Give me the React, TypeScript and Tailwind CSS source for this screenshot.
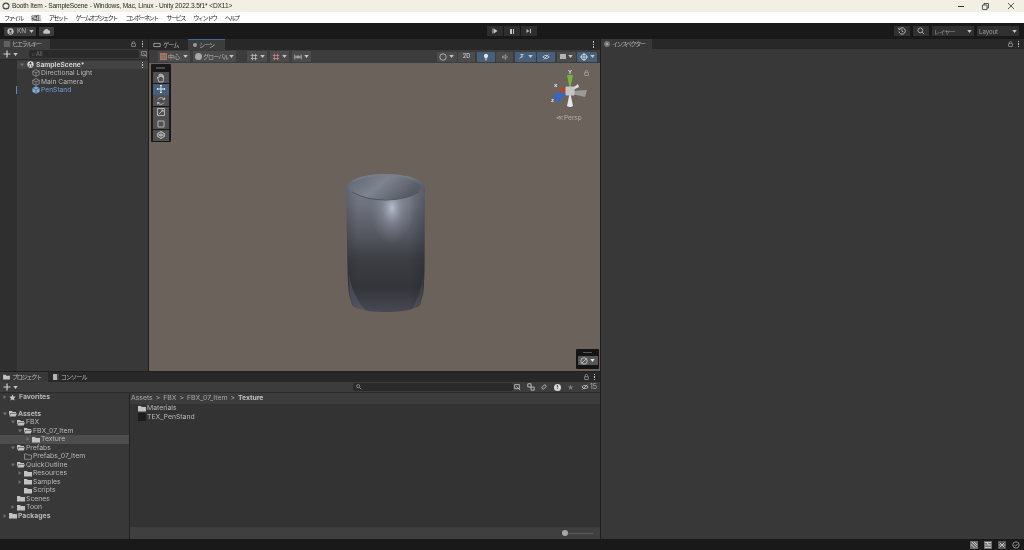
import { ReactNode } from "react";

const jp = "font-['Noto_Sans_CJK_JP','Noto_Sans',sans-serif] whitespace-nowrap";

const Caret = ({ dir }: { dir?: "right" | "down" }) => (
  <svg viewBox="0 0 6 6" className="w-[6px] h-[6px] shrink-0">
    {dir === "right" && <path d="M1.5 1 L4.5 3 L1.5 5 Z" fill="#6e6e6e" />}
    {dir === "down" && <path d="M0.8 1.5 L5.2 1.5 L3 4.5 Z" fill="#6e6e6e" />}
  </svg>
);

const Drop = ({ color = "#c4c4c4" }: { color?: string }) => (
  <svg viewBox="0 0 6 4" className="w-[5px] h-[3px] shrink-0">
    <path d="M0 0 H6 L3 4 Z" fill={color} />
  </svg>
);

const Folder = ({ open, empty }: { open?: boolean; empty?: boolean }) => (
  <svg viewBox="0 0 8 7" className="w-[8px] h-[7px] shrink-0">
    {empty ? (
      <path d="M0.5 1 H3 L3.8 2 H7.5 V6.3 H0.5 Z" fill="none" stroke="#b8b8b8" strokeWidth="0.6" />
    ) : open ? (
      <>
        <path d="M0 1 H3 L3.8 2 H7 V3 H1.5 L0 6 Z" fill="#c2c2c2" />
        <path d="M1.8 3.4 H8 L6.6 6.5 H0.5 Z" fill="#c2c2c2" />
      </>
    ) : (
      <path d="M0 1 H3 L3.8 2 H8 V6.5 H0 Z" fill="#c2c2c2" />
    )}
  </svg>
);

const Cube = ({ color = "#b4b4b4", solid }: { color?: string; solid?: boolean }) => (
  <svg viewBox="0 0 10 10" className="w-[8px] h-[8px] shrink-0">
    <path d="M5 0.8 L9 2.8 V7.2 L5 9.2 L1 7.2 V2.8 Z" fill={solid ? color : "none"} stroke={color} strokeWidth="0.8" />
    <path d="M1 2.8 L5 4.8 L9 2.8 M5 4.8 V9.2" fill="none" stroke={solid ? "#2f3b46" : color} strokeWidth="0.7" />
  </svg>
);

const Lock = () => (
  <svg viewBox="0 0 6 7" className="w-[5px] h-[6px]">
    <path d="M1.5 3 V2 A1.5 1.5 0 0 1 4.5 2" fill="none" stroke="#bdbdbd" strokeWidth="0.7" />
    <rect x="0.7" y="3" width="4.6" height="3.5" rx="0.5" fill="none" stroke="#bdbdbd" strokeWidth="0.7" />
  </svg>
);

const Kebab = () => (
  <div className="flex flex-col gap-[1px]">
    <span className="w-[1.5px] h-[1.5px] bg-[#c4c4c4]" />
    <span className="w-[1.5px] h-[1.5px] bg-[#c4c4c4]" />
    <span className="w-[1.5px] h-[1.5px] bg-[#c4c4c4]" />
  </div>
);

const Plus = () => (
  <div className="flex items-center gap-[1.5px]">
    <svg viewBox="0 0 8 8" className="w-[8px] h-[8px]">
      <path d="M4 0.5 V7.5 M0.5 4 H7.5" stroke="#d0d0d0" strokeWidth="1.2" />
    </svg>
    <Drop />
  </div>
);

const Btn = ({ w, blue, children }: { w: string; blue?: boolean; children: ReactNode }) => (
  <div className={`${w} h-[10px] rounded-[1px] flex items-center justify-center gap-[2px] ${blue ? "bg-[#46607c]" : "bg-[#4b4b4b]"}`}>
    {children}
  </div>
);

const Tab = ({ icon, label }: { icon: ReactNode; label: string }) => (
  <div className="h-full flex items-center gap-[2px] pl-[3px] pr-[7px] bg-[#383838]">
    {icon}
    <span className={`${jp} text-[6.2px] tracking-[-1.4px] text-[#b4b4b4]`}>{label}</span>
  </div>
);

const Glyph = ({ d, color = "#c4c4c4", big }: { d: string; color?: string; big?: boolean }) => (
  <svg viewBox="0 0 10 10" className={`${big ? "w-[10px] h-[10px]" : "w-[8px] h-[8px]"} shrink-0`}>
    <path d={d} fill="none" stroke={color} strokeWidth="1" />
  </svg>
);

const Title = () => (
  <div className="h-[12px] bg-[#f2f0e4] flex items-center relative">
    <svg viewBox="0 0 10 10" className="w-[8px] h-[8px] ml-[2px]">
      <circle cx="5" cy="5" r="4.4" fill="#3a3a3a" />
      <path d="M5 2 L8 3.6 V6.6 L5 8.2 L2 6.6 V3.6 Z" fill="#efefef" />
    </svg>
    <span className="ml-[2px] font-['Liberation_Sans',sans-serif] text-[6.6px] tracking-[-0.12px] text-[#262626]">
      Booth Item - SampleScene - Windows, Mac, Linux - Unity 2022.3.5f1* &lt;DX11&gt;
    </span>
    <div className="ml-auto flex items-center">
      <div className="w-[24px] flex justify-center"><span className="w-[6px] h-[1px] bg-[#333]" /></div>
      <div className="w-[25px] flex justify-center">
        <svg viewBox="0 0 7 7" className="w-[7px] h-[7px]">
          <path d="M0.5 2 H5 V6.5 H0.5 Z M2 2 V0.5 H6.5 V5 H5" fill="none" stroke="#333" strokeWidth="0.8" />
        </svg>
      </div>
      <div className="w-[25px] mr-[1px] flex justify-center">
        <svg viewBox="0 0 6 6" className="w-[6px] h-[6px]"><path d="M0 0 L6 6 M6 0 L0 6" stroke="#333" strokeWidth="0.8" /></svg>
      </div>
    </div>
  </div>
);

const menus = ["ファイル", "編集", "アセット", "ゲームオブジェクト", "コンポーネント", "サービス", "ウィンドウ", "ヘルプ"];

const Menu = () => (
  <div className={`h-[11px] bg-white flex items-center gap-[8.4px] pl-[4px] ${jp} text-[6.2px] tracking-[-1.55px] text-[#222]`}>
    {menus.map((m) => (
      <span key={m}>{m}</span>
    ))}
  </div>
);

const MainBar = () => (
  <div className="h-[16px] bg-[#191919] flex items-center pl-[4px] pr-[5px]">
    <div className="w-[32px] h-[9px] bg-[#3c3c3c] rounded-[1px] flex items-center gap-[3px] pl-[3px]">
      <svg viewBox="0 0 8 8" className="w-[7px] h-[7px]">
        <circle cx="4" cy="4" r="3.6" fill="#c4c4c4" />
        <circle cx="4" cy="3.2" r="1.3" fill="#3c3c3c" />
        <path d="M1.8 6.4 A2.4 2 0 0 1 6.2 6.4" fill="#3c3c3c" />
      </svg>
      <span className="font-['Inter',sans-serif] text-[6.5px] leading-[9px] text-[#b4b4b4]">KN</span>
      <Drop />
    </div>
    <div className="w-[15px] h-[9px] bg-[#3c3c3c] rounded-[1px] ml-[3px] flex items-center justify-center">
      <svg viewBox="0 0 10 6" className="w-[9px] h-[6px]">
        <path d="M2.5 6 A2 2 0 0 1 2.3 2.4 A2.8 2.8 0 0 1 7.4 2.2 A2 2 0 0 1 8 6 Z" fill="#c4c4c4" />
      </svg>
    </div>
    <div className="ml-[433px] w-[50px] h-[10px] grid grid-cols-3 gap-[1px]">
      <div className="bg-[#2e2e2e] flex items-center justify-center">
        <svg viewBox="0 0 6 6" className="w-[6px] h-[6px]"><path d="M0.5 0.5 H1.3 V5.5 H0.5 Z M1.8 0.5 L5.5 3 L1.8 5.5 Z" fill="#c4c4c4" /></svg>
      </div>
      <div className="bg-[#2e2e2e] flex items-center justify-center gap-[1px]">
        <span className="w-[1.5px] h-[5px] bg-[#c4c4c4]" />
        <span className="w-[1.5px] h-[5px] bg-[#c4c4c4]" />
      </div>
      <div className="bg-[#2e2e2e] flex items-center justify-center">
        <svg viewBox="0 0 6 6" className="w-[6px] h-[6px]"><path d="M0.5 1 L3.5 3 L0.5 5 Z M4 0.8 H5 V5.2 H4 Z" fill="#b4b4b4" /></svg>
      </div>
    </div>
    <div className="ml-auto flex items-center gap-[3px] h-[10px]">
      <div className="w-[16px] h-full bg-[#303030] flex items-center justify-center">
        <Glyph d="M2 2.5 A4 4 0 1 1 1.2 5.5 M5 3 V5.4 L6.6 6.2 M1 1 V3 H3" color="#d0d0d0" />
      </div>
      <div className="w-[16px] h-full bg-[#303030] flex items-center justify-center">
        <Glyph d="M4.2 1.2 A3 3 0 1 1 4.2 7.2 A3 3 0 1 1 4.2 1.2 M6.4 6.4 L9 9" />
      </div>
      <div className="w-[42px] h-full bg-[#303030] flex items-center justify-between px-[2px]">
        <span className={`${jp} text-[6px] tracking-[-0.8px] text-[#9a9a9a]`}>レイヤー</span>
        <Drop />
      </div>
      <div className="w-[42px] h-full bg-[#303030] flex items-center justify-between px-[2px]">
        <span className="font-['Inter',sans-serif] text-[6px] text-[#9a9a9a]">Layout</span>
        <Drop />
      </div>
    </div>
  </div>
);

const Hierarchy = () => (
  <div className="w-[148px] bg-[#383838] flex flex-col">
    <div className="h-[10px] bg-[#282828] flex items-center">
      <div className="h-full w-[50px] bg-[#3c3c3c] flex items-center gap-[1px] pl-[3px]">
        <Glyph d="M1 2.5 H9 M1 5 H9 M1 7.5 H9" color="#9a9a9a" />
        <span className={`${jp} text-[6.2px] tracking-[-1.4px] text-[#b4b4b4]`}>ヒエラルキー</span>
      </div>
      <div className="ml-auto mr-[5px] flex items-center gap-[6px]">
        <Lock />
        <Kebab />
      </div>
    </div>
    <div className="h-[11px] bg-[#3c3c3c] flex items-center pl-[3px] border-b border-[#2a2a2a]">
      <Plus />
      <div className="ml-[11px] w-[115px] h-[8px] bg-[#2a2a2a] rounded-[2px] flex items-center pl-[3px] gap-[2px]">
        <span className="font-['Inter',sans-serif] text-[5.5px] text-[#777]">⌕ All</span>
      </div>
      <div className="ml-[1px]"><Glyph d="M2 7 H8 V2 H2 Z M4 4 L9 9" color="#999" /></div>
    </div>
    <div className="flex flex-1">
      <div className="w-[17px] bg-[#2f2f2f] flex flex-col pt-[26px] items-end">
        <span className="w-[1px] h-[8px] bg-[#4f8fd0]" />
      </div>
      <div className="flex-1 flex flex-col pt-[0.5px] font-['Inter',sans-serif] text-[6.7px] text-[#b8b8b8] leading-[8.5px]">
        <div className="h-[8.5px] bg-[#434343] flex items-center pl-[2px] gap-[2px] pr-[5px]">
          <Caret dir="down" />
          <svg viewBox="0 0 10 10" className="w-[7px] h-[7px] shrink-0">
            <circle cx="5" cy="5" r="4.5" fill="#dcdcdc" />
            <path d="M5 1 L7 4.6 H3 Z M2 8 L3 5.4 L4.6 8 Z M8 8 L7 5.4 L5.4 8 Z" fill="#333" />
          </svg>
          <span className="font-bold text-[#d0d0d0]">SampleScene*</span>
          <div className="ml-auto"><Kebab /></div>
        </div>
        <div className="h-[8.5px] flex items-center pl-[15px] gap-[1px]"><Cube /><span>Directional Light</span></div>
        <div className="h-[8.5px] flex items-center pl-[15px] gap-[1px]"><Cube /><span>Main Camera</span></div>
        <div className="h-[8.5px] flex items-center pl-[15px] gap-[1px] text-[#6d9fd6]"><Cube color="#7fb2e0" solid /><span>PenStand</span></div>
      </div>
    </div>
  </div>
);

const Scene = () => (
  <div className="w-[451px] flex flex-col">
    <div className="h-[11px] bg-[#282828] flex items-center">
      <div className="h-full w-[39px] flex items-center gap-[2px] pl-[4px]">
        <Glyph d="M1 3 H9 V7 H1 Z" color="#b4b4b4" />
        <span className={`${jp} text-[6.2px] tracking-[-1px] text-[#b4b4b4]`}>ゲーム</span>
      </div>
      <div className="h-full w-[37px] bg-[#3c3c3c] border-t border-[#3d6a9c] flex items-center gap-[2px] pl-[4px]">
        <span className="w-[4px] h-[4px] rounded-full bg-[#9a9a9a] ml-[1px]" />
        <span className={`${jp} text-[6.2px] tracking-[-1px] text-[#b4b4b4]`}>シーン</span>
      </div>
      <div className="ml-auto mr-[6px]"><Kebab /></div>
    </div>
    <div className="h-[13px] bg-[#3c3c3c] flex items-center pl-[9px] pr-[3px] gap-[2px]">
      <div className="w-[32px] h-[11px] bg-[#4b4b4b] rounded-[1px] flex items-center gap-[1px] px-[2px]">
        <span className="w-[7px] h-[7px] border border-[#d0654a] bg-[#777]" />
        <span className={`${jp} text-[6px] text-[#b4b4b4]`}>中心</span>
        <div className="ml-auto"><Drop /></div>
      </div>
      <div className="w-[43px] h-[11px] bg-[#4b4b4b] rounded-[1px] flex items-center gap-[1px] px-[2px] ml-[1px]">
        <span className="w-[7px] h-[7px] rounded-full bg-[#a8a8a8] shrink-0" />
        <span className={`${jp} text-[6px] tracking-[-0.9px] text-[#b4b4b4]`}>グローバル</span>
        <div className="ml-auto"><Drop /></div>
      </div>
      <div className="w-[20px] h-[11px] bg-[#4b4b4b] ml-[9px] flex items-center justify-center gap-[2px]"><Glyph d="M3 1 V9 M7 1 V9 M1 3 H9 M1 7 H9" /><Drop /></div>
      <div className="w-[19px] h-[11px] bg-[#4b4b4b] ml-[1px] flex items-center justify-center gap-[2px]"><Glyph d="M3 1 V9 M7 1 V9 M1 3 H9 M1 7 H9" color="#d88" /><Drop /></div>
      <div className="w-[19px] h-[11px] bg-[#4b4b4b] ml-[1px] flex items-center justify-center gap-[2px]"><Glyph d="M1 2 V8 M9 2 V8 M1 5 H9 M4 3 V7 M6 3 V7" /><Drop /></div>
      <div className="ml-auto flex items-center gap-[1.5px]">
        <Btn w="w-[20px]"><Glyph d="M5 1 A4 4 0 1 1 5 9 A4 4 0 1 1 5 1" /><Drop /></Btn>
        <Btn w="w-[17px]"><span className="font-['Inter',sans-serif] text-[5.5px] text-[#c4c4c4] font-semibold">2D</span></Btn>
        <Btn w="w-[18px]" blue>
          <svg viewBox="0 0 8 10" className="w-[6px] h-[8px]"><path d="M4 0.5 A3 3 0 0 1 5.5 6 V7 H2.5 V6 A3 3 0 0 1 4 0.5 Z M3 8 H5 V9.4 H3 Z" fill="#e4e4e4" /></svg>
        </Btn>
        <Btn w="w-[17px]"><Glyph d="M2 4 H4 L6 2 V8 L4 6 H2 Z M7.5 4 V6" color="#aaa" /></Btn>
        <Btn w="w-[21px]" blue><Glyph d="M2 7 L5 4 M5 2 V6 M3 2 H7" color="#e0e0e0" /><Drop /></Btn>
        <Btn w="w-[18px]" blue><Glyph d="M1 5 Q5 1 9 5 Q5 9 1 5 M2 8 L8 2" color="#d8d8d8" /></Btn>
        <Btn w="w-[19px]">
          <span className="w-[6px] h-[5px] bg-[#b4b4b4]" />
          <Drop />
        </Btn>
        <Btn w="w-[20px]" blue>
          <Glyph d="M5 1.5 A3.5 3.5 0 1 1 5 8.5 A3.5 3.5 0 1 1 5 1.5 M5 0 V10 M0 5 H10" color="#e0e0e0" />
          <Drop />
        </Btn>
      </div>
    </div>
    <div className="relative flex-1 bg-[#6b625c] overflow-hidden">
      <ToolsOverlay />
      <Gizmo />
      <Mug />
      <div className="absolute right-[1px] bottom-[2px] w-[23px] h-[20px] bg-[#141414] rounded-[1px] flex flex-col items-center pt-[3px]">
        <span className="w-[9px] h-[1px] bg-[#555]" />
        <div className="mt-[3px] w-[20px] h-[9px] bg-[#585858] flex items-center justify-center gap-[2px]">
          <Glyph d="M5 1 A4 4 0 1 1 5 9 A4 4 0 1 1 5 1 M2 8 L8 2" color="#d4d4d4" />
          <Drop color="#e4e4e4" />
        </div>
      </div>
    </div>
  </div>
);

const toolIcons = [
  "M3 9 L1.5 5 V4 L3 5 V1.5 H4 V4 V1 H5.2 V4 V1.5 H6.4 V4.5 V2.5 H7.5 V6 L7 9 Z",
  "M5 1 V9 M1 5 H9 M4 2 L5 1 L6 2 M4 8 L5 9 L6 8 M2 4 L1 5 L2 6 M8 4 L9 5 L8 6",
  "M2 3.5 A3.7 3.7 0 0 1 8.4 3.5 M8 6.5 A3.7 3.7 0 0 1 1.6 6.5 M6.5 3.5 H8.6 V1.5 M3.5 6.5 H1.4 V8.5",
  "M1.5 1.5 H8.5 V8.5 H1.5 Z M3 7 L7 3 M5 3 H7 V5",
  "M2 2 H8 V8 H2 Z",
  "M5 1.5 L8.5 3.5 V6.5 L5 8.5 L1.5 6.5 V3.5 Z M5 1.5 V8.5 M1.5 3.5 L8.5 6.5 M8.5 3.5 L1.5 6.5",
];

const ToolsOverlay = () => (
  <div className="absolute left-[1.5px] top-[1px] w-[20px] h-[78px] bg-[#191919] rounded-[1px] flex flex-col items-center pt-[2px]">
    <span className="w-[9px] h-[2px] bg-[#4a4a4a] mt-[1px] mb-[3px]" />
    <div className="flex flex-col gap-[0.5px]">
      {toolIcons.map((d, i) => (
        <div key={d} className={`w-[16px] h-[11px] flex items-center justify-center ${i === 1 ? "bg-[#46607c]" : "bg-[#505050]"}`}>
          <Glyph big d={d} color={i === 1 ? "#e4e4e4" : "#b4b4b4"} />
        </div>
      ))}
    </div>
  </div>
);

const Gizmo = () => (
  <>
    <svg viewBox="0 0 44 44" className="absolute left-[399px] top-[6px] w-[44px] h-[44px]">
      <path d="M19 6 H25 L22 21 Z" fill="#76b53a" />
      <path d="M11 18.5 L12 23.5 L20 22 L18 19.5 Z" fill="#b5452f" />
      <path d="M5 27 L8 34 Q13 32 18 25 L12 23 Q6 24 5 27 Z" fill="#3c67b8" />
      <path d="M39 21 L37 28 L24 25 V22 Z" fill="#9a9a9a" />
      <path d="M19 37 Q22 39 25 37 L22.5 25 H21.5 Z" fill="#e6e6e6" />
      <path d="M26 18 L30 15 L31 18 L25 21 Z" fill="#dcdcdc" />
      <rect x="17.5" y="17.5" width="9" height="9" rx="1" fill="#c4c4c4" />
      <text x="20" y="5" fill="#e6e6e6" fontSize="6" fontWeight="700" fontFamily="Liberation Sans">Y</text>
      <text x="6" y="18" fill="#e6e6e6" fontSize="6" fontWeight="700" fontFamily="Liberation Sans">x</text>
      <text x="3" y="33" fill="#e6e6e6" fontSize="6" fontWeight="700" fontFamily="Liberation Sans">z</text>
    </svg>
    <div className="absolute left-[435px] top-[7px]"><Lock /></div>
    <div className="absolute left-[407px] top-[51px] flex items-center gap-[1px] font-['Inter',sans-serif] text-[6.5px] text-[#b5b0ab]">
      <span>≪</span>
      <span>Persp</span>
    </div>
  </>
);

const mugPath =
  "M0 18 C0 10 18 4 39.5 4 C61 4 79 10 79 18 L78.5 100 Q78 118 77 124 L74 135 Q66 142 40 142 Q14 142 6 135 L3 124 Q2 116 1.5 100 Z";

const Mug = () => (
  <svg viewBox="0 0 100 150" className="absolute left-[197px] top-[107px] w-[100px] h-[150px]">
    <defs>
      <linearGradient id="body" x1="0" y1="0" x2="0" y2="1">
        <stop offset="0" stopColor="#7a7f8b" />
        <stop offset="0.22" stopColor="#6e727e" />
        <stop offset="0.45" stopColor="#54565f" />
        <stop offset="0.62" stopColor="#3c3d43" />
        <stop offset="0.82" stopColor="#343539" />
        <stop offset="1" stopColor="#474953" />
      </linearGradient>
      <radialGradient id="spot" cx="46" cy="38" r="36" gradientUnits="userSpaceOnUse" gradientTransform="translate(46 38) scale(0.62 1) translate(-46 -38)">
        <stop offset="0" stopColor="#bcc1ce" stopOpacity="0.95" />
        <stop offset="0.45" stopColor="#9398a7" stopOpacity="0.5" />
        <stop offset="1" stopColor="#7e8392" stopOpacity="0" />
      </radialGradient>
      <linearGradient id="edge" x1="0" y1="0" x2="1" y2="0">
        <stop offset="0" stopColor="#22242c" stopOpacity="0.25" />
        <stop offset="0.15" stopColor="#22242c" stopOpacity="0" />
        <stop offset="0.8" stopColor="#22242c" stopOpacity="0" />
        <stop offset="1" stopColor="#22242c" stopOpacity="0.35" />
      </linearGradient>
      <linearGradient id="inner" x1="0" y1="0" x2="1" y2="0.4">
        <stop offset="0" stopColor="#5f6571" />
        <stop offset="0.5" stopColor="#7d838f" />
        <stop offset="1" stopColor="#565a63" />
      </linearGradient>
    </defs>
    <path d={mugPath} fill="url(#body)" />
    <path d={mugPath} fill="url(#edge)" />
    <path d={mugPath} fill="url(#spot)" />
    <path d="M3 104 Q6 126 20 141 Q9 138 6 134 L3.5 124 Z" fill="#6e7385" opacity="0.35" />
    <path d="M77.5 104 Q75 124 66 139 Q71 138 74 134 L76.5 124 Z" fill="#6e7385" opacity="0.25" />
    <ellipse cx="39.5" cy="17.5" rx="35.5" ry="12" fill="url(#inner)" />
    <path d="M6 22 Q20 30 39.5 30 Q59 30 73 22" fill="none" stroke="#4b4f5a" strokeWidth="0.9" />
  </svg>
);

const rowCls = "h-[8.5px] flex items-center gap-[1px]";

const tree = [
  { name: "FBX", pad: "pl-[10px]", dir: "down", open: true },
  { name: "FBX_07_Item", pad: "pl-[17px]", dir: "down", open: true },
  { name: "Texture", pad: "pl-[25px]", dir: "right", sel: true },
  { name: "Prefabs", pad: "pl-[10px]", dir: "down", open: true },
  { name: "Prefabs_07_Item", pad: "pl-[17px]", empty: true },
  { name: "QuickOutline", pad: "pl-[10px]", dir: "down", open: true },
  { name: "Resources", pad: "pl-[17px]", dir: "right" },
  { name: "Samples", pad: "pl-[17px]", dir: "right" },
  { name: "Scripts", pad: "pl-[17px]" },
  { name: "Scenes", pad: "pl-[10px]" },
  { name: "Toon", pad: "pl-[10px]", dir: "right" },
] as const;

const ProjectTree = () => (
  <div className="w-[130px] bg-[#383838] border-r border-[#222] font-['Inter',sans-serif] text-[6.85px] text-[#b8b8b8] leading-[8.5px]">
    <div className={`${rowCls} pl-[2px] font-bold`}>
      <Caret dir="right" />
      <svg viewBox="0 0 10 10" className="w-[7px] h-[7px] shrink-0 mr-[2px]">
        <path d="M5 0.5 L6.4 3.6 L9.7 3.9 L7.2 6.1 L8 9.4 L5 7.7 L2 9.4 L2.8 6.1 L0.3 3.9 L3.6 3.6 Z" fill="#c4c4c4" />
      </svg>
      <span>Favorites</span>
    </div>
    <div className="h-[8px]" />
    <div className={`${rowCls} pl-[2px] font-bold`}>
      <Caret dir="down" />
      <Folder open />
      <span>Assets</span>
    </div>
    {tree.map((n) => {
      const r = n as { name: string; pad: string; dir?: "right" | "down"; open?: boolean; empty?: boolean; sel?: boolean };
      return (
        <div key={r.name} className={`${rowCls} ${r.pad} ${r.sel ? "bg-[#4d4d4d]" : ""}`}>
          <Caret dir={r.dir} />
          <Folder open={r.open} empty={r.empty} />
          <span>{r.name}</span>
        </div>
      );
    })}
    <div className={`${rowCls} pl-[2px] font-bold`}>
      <Caret dir="right" />
      <Folder />
      <span>Packages</span>
    </div>
  </div>
);

const Project = () => (
  <div className="h-[168px] flex flex-col bg-[#383838] border-t border-[#1f1f1f]">
    <div className="h-[10px] bg-[#282828] flex items-center">
      <Tab
        label="プロジェクト"
        icon={<svg viewBox="0 0 8 7" className="w-[7px] h-[6px]"><path d="M0 1 H3 L3.8 2 H8 V6.5 H0 Z" fill="#c2c2c2" /></svg>}
      />
      <div className="h-full flex items-center gap-[2px] ml-[5px]">
        <span className="w-[6px] h-[6px] bg-[#b4b4b4] border-r-2 border-[#444]" />
        <span className={`${jp} text-[6.2px] tracking-[-1px] text-[#b4b4b4]`}>コンソール</span>
      </div>
      <div className="ml-auto mr-[5px] flex items-center gap-[5px]">
        <Lock />
        <Kebab />
      </div>
    </div>
    <div className="h-[11px] bg-[#3c3c3c] flex items-center pl-[3px] pr-[3px] border-b border-[#2a2a2a]">
      <Plus />
      <div className="ml-[335px] w-[160px] h-[8px] bg-[#2a2a2a] rounded-[2px] flex items-center pl-[2px]">
        <Glyph d="M4 2 A2 2 0 1 1 4 6 A2 2 0 1 1 4 2 M5.5 5.5 L8 8" color="#9a9a9a" />
      </div>
      <div className="ml-auto flex items-center gap-[5.5px]">
        <Glyph d="M2 7 H8 V2 H2 Z M4 4 L9 9" />
        <Glyph d="M1 1 H5 V5 H1 Z M5 5 H9 V9 H5 Z" color="#d4d4d4" />
        <Glyph d="M2 6 L6 2 L8 4 L4 8 Z" color="#d4d4d4" />
        <span className="w-[7px] h-[7px] rounded-full bg-[#d8d8d8] text-[6px] leading-[7px] text-center font-bold text-[#333]">!</span>
        <span className="text-[#777] text-[8px] leading-none mx-[1px]">★</span>
        <div className="flex items-center gap-[1px]">
          <Glyph d="M1 5 Q5 1 9 5 Q5 9 1 5 M2 8 L8 2" />
          <span className="font-['Inter',sans-serif] text-[7px] leading-[8px] whitespace-nowrap text-[#b4b4b4]">15</span>
        </div>
      </div>
    </div>
    <div className="flex flex-1 min-h-0">
      <ProjectTree />
      <div className="flex-1 flex flex-col font-['Inter',sans-serif] text-[6.85px] text-[#b8b8b8]">
        <div className="h-[11px] bg-[#3c3c3c] flex items-center pl-[1px] gap-[3px] text-[#a8a8a8]">
          <span>Assets</span><span>&gt;</span><span>FBX</span><span>&gt;</span><span>FBX_07_Item</span><span>&gt;</span>
          <span className="font-bold text-[#c4c4c4]">Texture</span>
        </div>
        <div className="flex-1 pl-[8px] bg-[#333333] leading-[8.5px]">
          <div className={rowCls}><Folder /><span>Materials</span></div>
          <div className={rowCls}>
            <span className="w-[8px] h-[8px] bg-[#1c1c1c] shrink-0" />
            <span>TEX_PenStand</span>
          </div>
        </div>
        <div className="h-[12px] bg-[#3f3f3f] flex items-center justify-end pr-[7px]">
          <div className="w-[30px] h-[1px] bg-[#5c5c5c] relative">
            <span className="absolute left-[-1px] top-[-2.5px] w-[6px] h-[6px] rounded-full bg-[#a8a8a8]" />
          </div>
        </div>
      </div>
    </div>
  </div>
);

const Inspector = () => (
  <div className="flex-1 bg-[#383838] flex flex-col border-l border-[#1f1f1f]">
    <div className="h-[10px] bg-[#282828] flex items-center">
      <Tab
        label="インスペクター"
        icon={<span className="w-[6px] h-[6px] rounded-full bg-[#b4b4b4] border-2 border-[#777]" />}
      />
      <div className="ml-auto mr-[5px] flex items-center gap-[5px]">
        <Lock />
        <Kebab />
      </div>
    </div>
  </div>
);

const Status = () => (
  <div className="h-[11px] bg-[#191919] flex items-center justify-end pr-[4px] gap-[6px]">
    <div className="bg-[#6a6a6a]"><Glyph d="M2 1 L9 8 M1 4 L6 9 M5 1 L9 5" color="#e4e4e4" /></div>
    <div className="bg-[#6a6a6a]"><Glyph d="M1 2 H9 M1 5 L9 5 M1 8 H9 M3 2 L7 5" color="#e4e4e4" /></div>
    <div className="bg-[#555]"><Glyph d="M2 2 L8 8 M8 2 L2 8 M1 5 H3 M7 5 H9" color="#e4e4e4" /></div>
    <Glyph d="M5 1 A4 4 0 1 1 5 9 A4 4 0 1 1 5 1 M3 5 L4.5 6.5 L7 3.5" color="#a8a8a8" />
  </div>
);

export default function App() {
  return (
    <div className="w-[1024px] h-[550px] flex flex-col overflow-hidden bg-[#191919] blur-[0.35px]">
      <Title />
      <Menu />
      <MainBar />
      <div className="flex flex-1 min-h-0">
        <div className="w-[600px] flex flex-col">
          <div className="flex flex-1 min-h-0 gap-[1px] bg-[#1f1f1f]">
            <Hierarchy />
            <Scene />
          </div>
          <Project />
        </div>
        <Inspector />
      </div>
      <Status />
    </div>
  );
}
